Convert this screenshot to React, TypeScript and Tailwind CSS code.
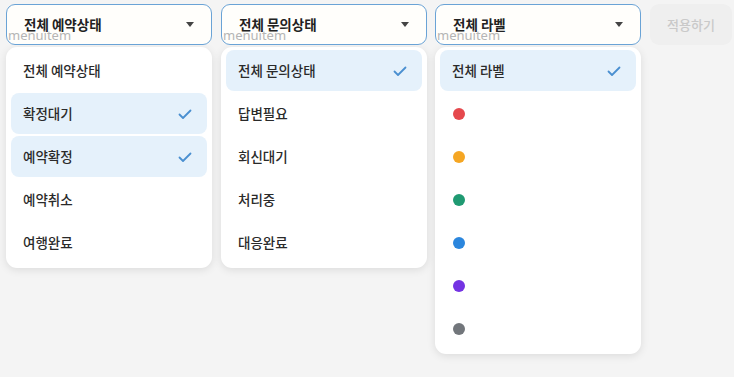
import React from "react";

type Option = { label?: string; dot?: string; selected?: boolean };

const font = { fontFamily: '"Noto Sans CJK KR", "Noto Sans", sans-serif' };

function Check() {
  return (
    <svg width="16" height="16" viewBox="0 0 16 16" fill="none">
      <path d="M2.5 8.5l3.5 3.5 7.5-7.5" stroke="#4a8fd0" strokeWidth="1.8" strokeLinecap="round" strokeLinejoin="round" />
    </svg>
  );
}

function Dropdown({ value, options }: { value: string; options: Option[] }) {
  return (
    <div className="flex w-[206px] shrink-0 flex-col gap-[2px]">
      {/* Trigger */}
      <div className="relative flex h-[41px] items-center justify-between rounded-[9px] border-[1.5px] border-[#6aa3d6] bg-[#fffefb] pl-[17px] pr-[17px]">
        <span className="text-[13.5px] font-semibold text-[#222]">{value}</span>
        <span className="h-0 w-0 border-x-[4px] border-t-[5px] border-x-transparent border-t-[#444]" />
        <span className="absolute left-[1px] top-[24px] text-[13px] leading-none text-[#b5b5b5]" style={{ fontFamily: '"Noto Sans", sans-serif' }}>
          menuitem
        </span>
      </div>
      {/* Menu */}
      <div className="flex flex-col gap-[2px] rounded-[11px] bg-white px-[5px] pb-[5px] pt-[3px] shadow-[0_2px_8px_rgba(0,0,0,0.10)]">
        {options.map((o, i) => (
          <div
            key={i}
            className={
              "flex h-[41px] items-center justify-between rounded-[8px] pl-[12px] pr-[14px] " +
              (o.selected ? "bg-[#e5f1fb]" : "")
            }
          >
            {o.dot ? (
              <span className="ml-[1px] h-[12px] w-[12px] rounded-full" style={{ backgroundColor: o.dot }} />
            ) : (
              <span className="text-[13.5px] font-medium text-[#2a2a2a]">{o.label}</span>
            )}
            {o.selected && <Check />}
          </div>
        ))}
      </div>
    </div>
  );
}

export default function App() {
  return (
    <div className="h-[377px] w-[734px] overflow-hidden bg-[#f4f4f4]" style={font}>
      <div className="flex items-start gap-[9px] pl-[6px] pt-[4px]">
        <Dropdown
          value="전체 예약상태"
          options={[
            { label: "전체 예약상태" },
            { label: "확정대기", selected: true },
            { label: "예약확정", selected: true },
            { label: "예약취소" },
            { label: "여행완료" },
          ]}
        />
        <Dropdown
          value="전체 문의상태"
          options={[
            { label: "전체 문의상태", selected: true },
            { label: "답변필요" },
            { label: "회신대기" },
            { label: "처리중" },
            { label: "대응완료" },
          ]}
        />
        <div className="-ml-[1px]">
          <Dropdown
            value="전체 라벨"
            options={[
              { label: "전체 라벨", selected: true },
              { dot: "#e5484d" },
              { dot: "#f5a623" },
              { dot: "#1f9a72" },
              { dot: "#2b86dd" },
              { dot: "#7433e3" },
              { dot: "#72767b" },
            ]}
          />
        </div>
        <button className="flex h-[41px] w-[82px] shrink-0 items-center justify-center rounded-[9px] bg-[#efefef] text-[13px] font-medium text-[#c9c9c9]">
          적용하기
        </button>
      </div>
    </div>
  );
}
